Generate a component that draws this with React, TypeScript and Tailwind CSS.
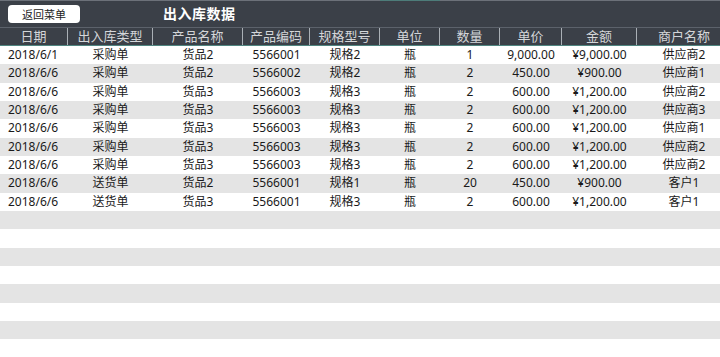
const cols = [
  { label: "日期", w: "w-[68px]", align: "justify-start pl-[8px]" },
  { label: "出入库类型", w: "w-[85px]", align: "justify-center" },
  { label: "产品名称", w: "w-[90px]", align: "justify-center" },
  { label: "产品编码", w: "w-[67px]", align: "justify-center" },
  { label: "规格型号", w: "w-[70px]", align: "justify-center" },
  { label: "单位", w: "w-[60px]", align: "justify-center" },
  { label: "数量", w: "w-[60px]", align: "justify-center" },
  { label: "单价", w: "w-[62px]", align: "justify-center" },
  { label: "金额", w: "w-[75px]", align: "justify-center" },
  { label: "商户名称", w: "w-[94px]", align: "justify-center" },
];

const rows = [
  ["2018/6/1", "采购单", "货品2", "5566001", "规格2", "瓶", "1", "9,000.00", "¥9,000.00", "供应商2"],
  ["2018/6/6", "采购单", "货品2", "5566002", "规格2", "瓶", "2", "450.00", "¥900.00", "供应商1"],
  ["2018/6/6", "采购单", "货品3", "5566003", "规格3", "瓶", "2", "600.00", "¥1,200.00", "供应商2"],
  ["2018/6/6", "采购单", "货品3", "5566003", "规格3", "瓶", "2", "600.00", "¥1,200.00", "供应商3"],
  ["2018/6/6", "采购单", "货品3", "5566003", "规格3", "瓶", "2", "600.00", "¥1,200.00", "供应商1"],
  ["2018/6/6", "采购单", "货品3", "5566003", "规格3", "瓶", "2", "600.00", "¥1,200.00", "供应商2"],
  ["2018/6/6", "采购单", "货品3", "5566003", "规格3", "瓶", "2", "600.00", "¥1,200.00", "供应商2"],
  ["2018/6/6", "送货单", "货品2", "5566001", "规格1", "瓶", "20", "450.00", "¥900.00", "客户1"],
  ["2018/6/6", "送货单", "货品3", "5566001", "规格3", "瓶", "2", "600.00", "¥1,200.00", "客户1"],
];

export default function App() {
  // empty striped rows below the data
  const blanks = Array.from({ length: 8 });

  return (
    <div className="w-[720px] h-[357px] overflow-hidden bg-white font-['Noto_Sans','Noto_Sans_CJK_SC',sans-serif]">
      <div className="w-[731px]">
        {/* top strip */}
        <div className="flex h-[1px] bg-[#6c7179]">
          <div className="w-[380px]" />
          <div className="w-[60px] bg-[#4d7c79]" />
        </div>

        {/* title bar */}
        <div className="flex items-center h-[26px] bg-[#3b4048]">
          <button className="ml-[8px] w-[72px] h-[18px] rounded-[4px] bg-white text-[11px] leading-none text-[#222] flex items-center justify-center">
            返回菜单
          </button>
          <div className="ml-[83px] text-[14px] font-bold text-white leading-none tracking-[0.5px]">
            出入库数据
          </div>
        </div>

        {/* header */}
        <div className="flex h-[19px] bg-[#3b4048] border-t border-[#5c626b] border-b border-b-[#4f8580]">
          {cols.map((c, i) => (
            <div
              key={c.label}
              className={`${c.w} flex items-center justify-center text-[13px] leading-none text-[#d4d6d9] ${
                i < cols.length - 1 ? "border-r border-[#aab0b6]" : ""
              }`}
            >
              {c.label}
            </div>
          ))}
        </div>

        {/* data rows */}
        {rows.map((r, ri) => (
          <div
            key={ri}
            className={`flex h-[18.33px] ${ri % 2 === 1 ? "bg-[#e4e4e4]" : "bg-white"}`}
          >
            {r.map((v, ci) => (
              <div
                key={ci}
                className={`${cols[ci].w} ${cols[ci].align} flex items-center text-[12px] leading-none text-[#1a1a1a]`}
              >
                {v}
              </div>
            ))}
          </div>
        ))}

        {blanks.map((_, i) => (
          <div
            key={i}
            className={`h-[18.33px] ${i % 2 === 0 ? "bg-[#e4e4e4]" : "bg-white"}`}
          />
        ))}
      </div>
    </div>
  );
}
